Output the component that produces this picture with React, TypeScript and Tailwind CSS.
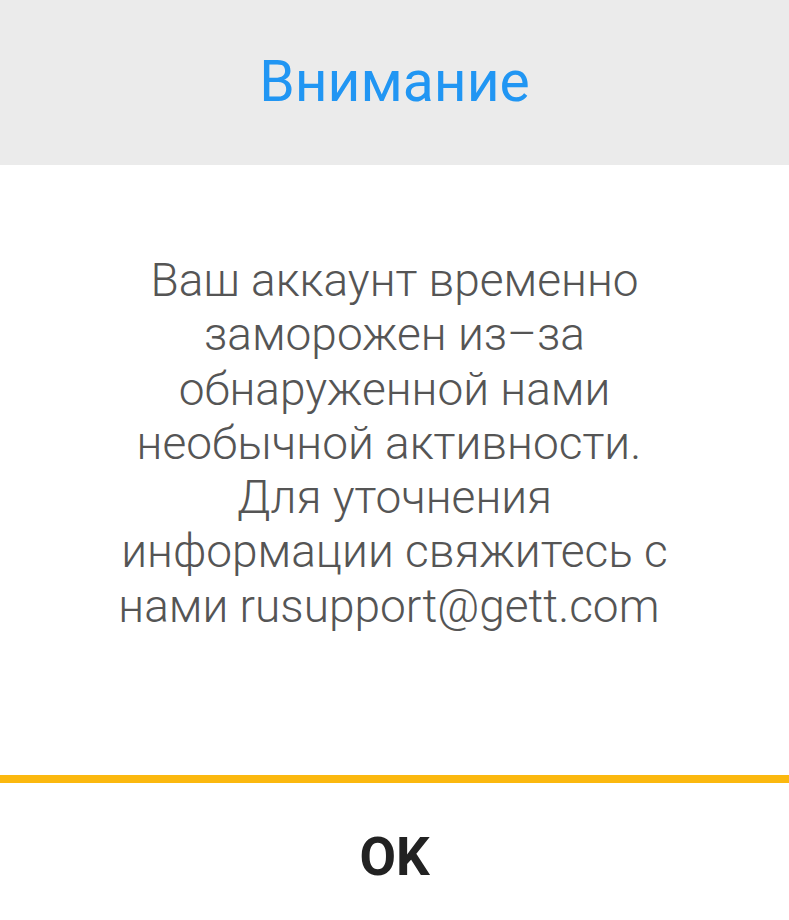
import React from 'react';

// trailing spaces are kept on purpose: the original lines are centred with them
const lines = [
  'Ваш аккаунт временно',
  'заморожен из–за',
  'обнаруженной нами',
  'необычной активности. ',
  'Для уточнения',
  'информации свяжитесь с',
  'нами rusupport@gett.com ',
];

export default function App() {
  return (
    <div className="w-[789px] h-[920px] flex flex-col bg-white font-['Roboto',sans-serif]">
      {/* Header */}
      <div className="h-[165px] shrink-0 bg-[#ebebeb] flex items-center justify-center">
        <h1 className="text-[57px] leading-none text-[#2196f3] font-normal pb-[2px]">Внимание</h1>
      </div>

      {/* Message */}
      <div className="flex-1 flex flex-col items-center pt-[88px] text-[46px] leading-[54.3px] font-light text-[#555555]">
        {lines.map(line => (
          <p key={line} className="whitespace-pre text-center">{line}</p>
        ))}
      </div>

      <div className="h-[8px] shrink-0 bg-[#fbb80f]" />

      {/* Button */}
      <div className="h-[137px] shrink-0 flex items-center justify-center">
        <span className="text-[53px] leading-none font-bold text-[#222222] pt-[12px]">OK</span>
      </div>
    </div>
  );
}
